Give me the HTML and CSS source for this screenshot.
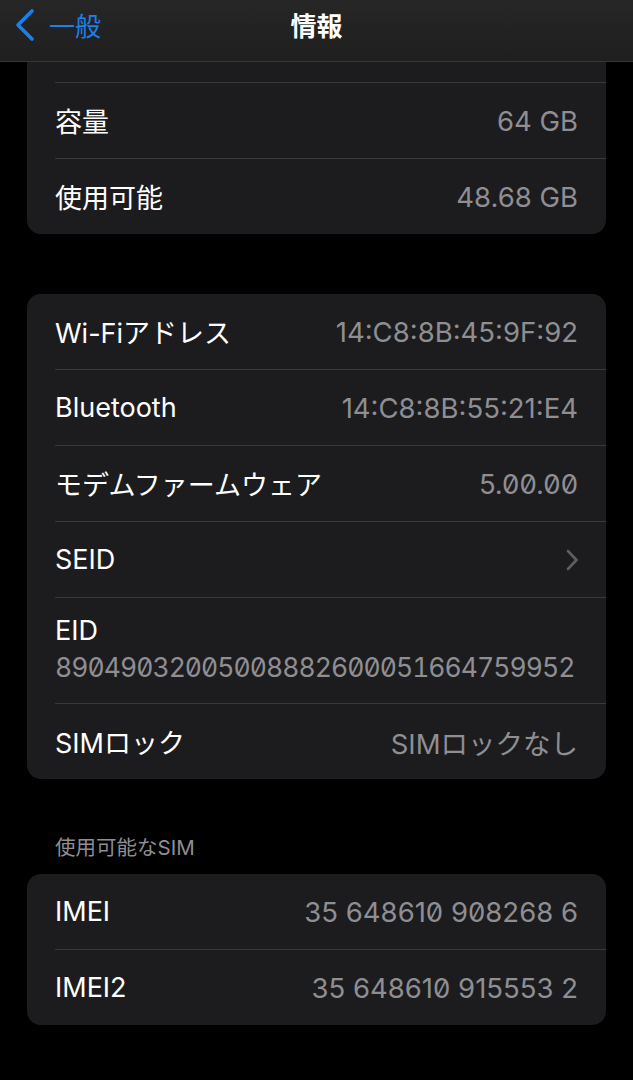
FILE: index.html
```html
<!doctype html>
<html>
<head>
	<meta charset="UTF-8">
	<title>情報</title>
	<link rel="stylesheet" href="styles.css">
</head>
<body>
	<div class="header">
		<a class="back">
			<svg class="back-icon" width="24" height="34" viewBox="0 0 24 34">
				<path d="M19 3 L5 17 L19 31" fill="none" stroke="#1b80ea" stroke-width="3.6" stroke-linecap="round" stroke-linejoin="round"/>
			</svg>
			<span>一般</span>
		</a>
		<h1 class="title">情報</h1>
		<div></div>
	</div>

	<div class="content">
		<!-- first group scrolled under the bar -->
		<div class="group group-cut">
			<div class="row row-cut"></div>
			<div class="row">
				<span class="label">容量</span>
				<span class="value">64 GB</span>
			</div>
			<div class="row">
				<span class="label">使用可能</span>
				<span class="value">48.68 GB</span>
			</div>
		</div>

		<div class="group">
			<div class="row">
				<span class="label">Wi-Fiアドレス</span>
				<span class="value">14:C8:8B:45:9F:92</span>
			</div>
			<div class="row">
				<span class="label">Bluetooth</span>
				<span class="value">14:C8:8B:55:21:E4</span>
			</div>
			<div class="row">
				<span class="label">モデムファームウェア</span>
				<span class="value">5.00.00</span>
			</div>
			<div class="row">
				<span class="label">SEID</span>
				<svg class="chevron" width="14" height="22" viewBox="0 0 14 22">
					<path d="M3 2 L11.5 11 L3 20" fill="none" stroke="#5d5d62" stroke-width="2.6" stroke-linecap="round" stroke-linejoin="round"/>
				</svg>
			</div>
			<div class="row row-stack">
				<span class="label">EID</span>
				<span class="value">89049032005008882600051664759952</span>
			</div>
			<div class="row">
				<span class="label">SIMロック</span>
				<span class="value">SIMロックなし</span>
			</div>
		</div>

		<div class="section-title">使用可能なSIM</div>
		<div class="group">
			<div class="row">
				<span class="label">IMEI</span>
				<span class="value">35 648610 908268 6</span>
			</div>
			<div class="row">
				<span class="label">IMEI2</span>
				<span class="value">35 648610 915553 2</span>
			</div>
		</div>
	</div>
</body>
</html>
```

FILE: styles.css
```css
*{
	margin:0px;
	padding:0px;
	box-sizing:border-box;
	font-family: Inter, "Noto Sans CJK JP", sans-serif;
}
body{
	background: #000000;
	color: #FFFFFF;
	width: 633px;
	height: 1080px;
	overflow: hidden;
}
.header{
	display: grid;
	grid-template-columns: 1fr auto 1fr;
	align-items: center;
	height: 62px;
	padding-bottom: 12px;
	background: linear-gradient(#262627, #1f1f20);
	border-bottom: 1px solid #363638;
}
.back{
	display: flex;
	align-items: center;
	gap: 12px;
	padding-left: 13px;
	color: #1b80ea;
	font-size: 26px;
}
.back-icon{
	display: block;
}
.title{
	font-size: 26px;
	font-weight: 700;
}
.content{
	padding: 0px 27px;
}
.group{
	background: #1c1c1e;
	border-radius: 14px;
	padding-left: 28px;
	margin-top: 60px;
}
.group-cut{
	margin-top: 0px;
	border-radius: 0px 0px 14px 14px;
}
.row{
	display: flex;
	align-items: center;
	justify-content: space-between;
	height: 75px;
	padding-right: 28px;
	font-size: 27px;
}
.row + .row{
	height: 76px;
	border-top: 1px solid #38383a;
}
.row-cut{
	height: 20px;
}
.value{
	color: #8e8e93;
	font-size: 27.5px;
	font-variant-numeric: slashed-zero;
}
.chevron{
	display: block;
	margin-right: -1px;
}
.row.row-stack{
	flex-direction: column;
	align-items: flex-start;
	justify-content: flex-start;
	height: 106px;
	padding-top: 14px;
	line-height: 37px;
}
.row-stack .value{
	font-size: 26.5px;
	font-variant-numeric: tabular-nums slashed-zero;
	letter-spacing: -0.95px;
}
.section-title{
	color: #8e8e93;
	font-size: 20.5px;
	line-height: 24px;
	padding: 57px 0px 14px 28px;
}
.section-title + .group{
	margin-top: 0px;
}
```
